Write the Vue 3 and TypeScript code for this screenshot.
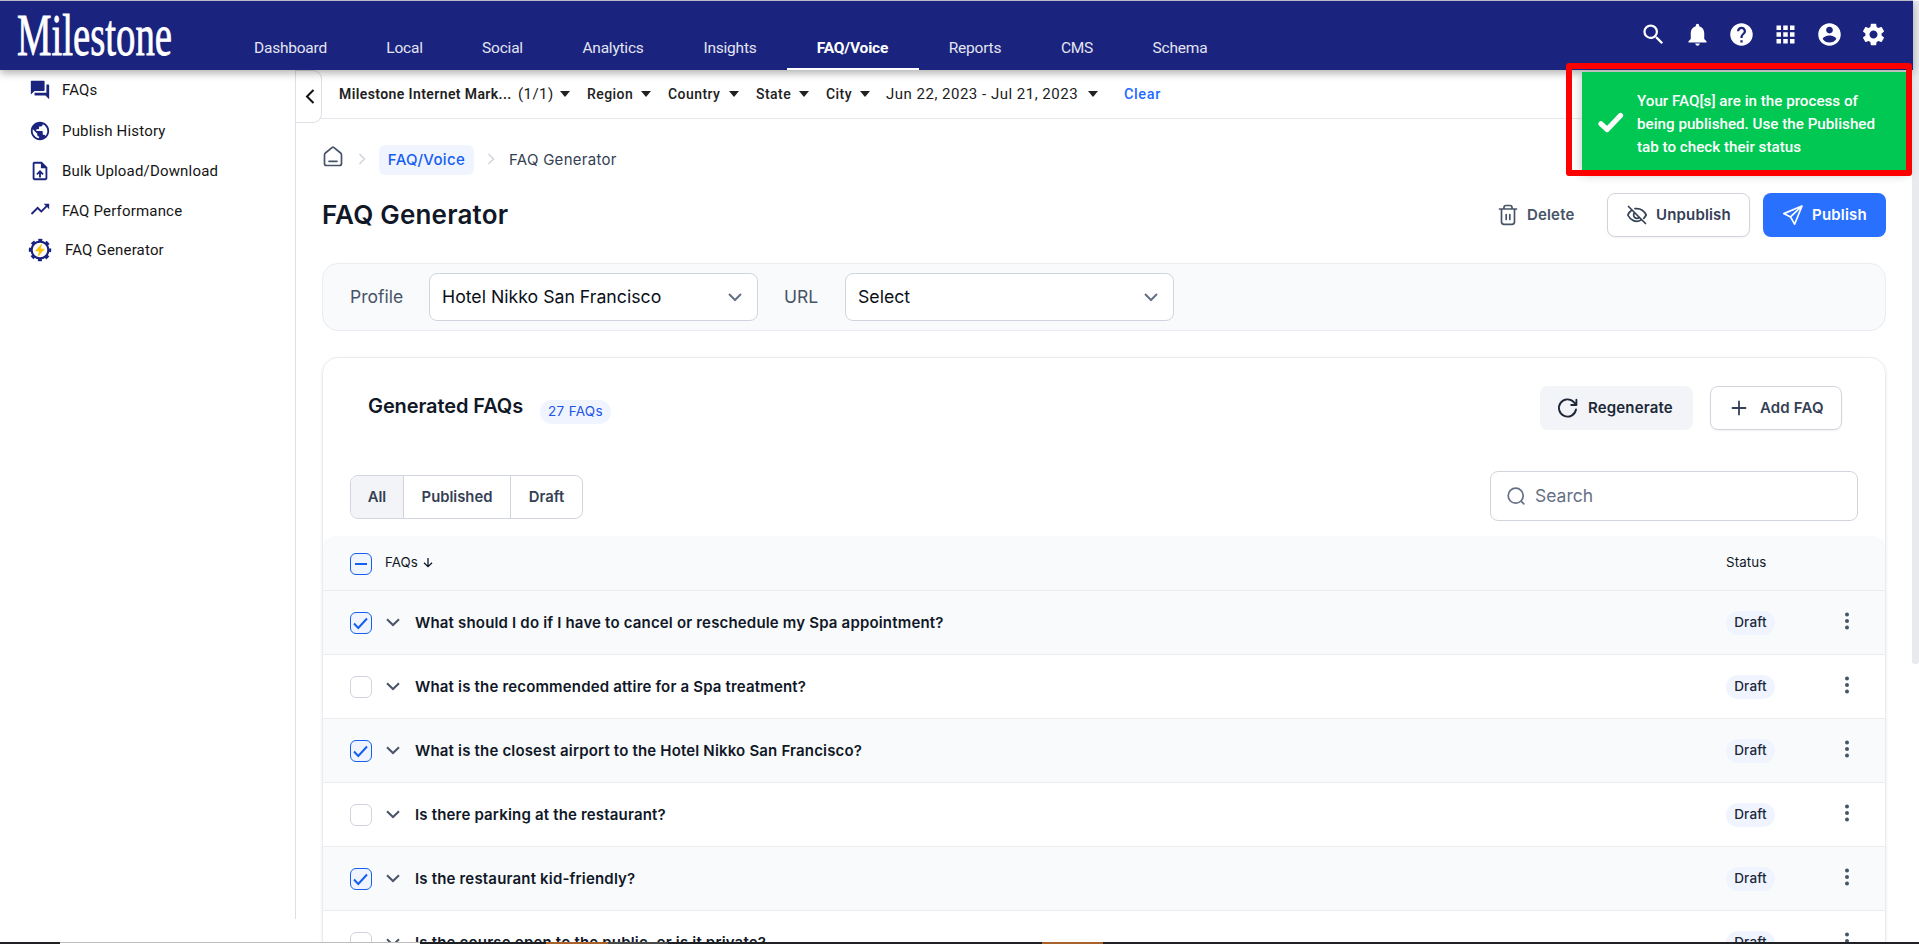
<script setup lang="ts">
interface NavTab { label: string; width: number; active?: boolean }
interface Filter { label: string; width: number; suffix?: string; strong?: boolean }
interface Faq { question: string; checked: boolean }

const tabs: NavTab[] = [
  { label: 'Dashboard', width: 132 },
  { label: 'Local', width: 96 },
  { label: 'Social', width: 100 },
  { label: 'Analytics', width: 121 },
  { label: 'Insights', width: 113 },
  { label: 'FAQ/Voice', width: 132, active: true },
  { label: 'Reports', width: 113 },
  { label: 'CMS', width: 91 },
  { label: 'Schema', width: 115 },
]

const topIcons: string[] = [
  'M15.5 14h-.79l-.28-.27A6.471 6.471 0 0 0 16 9.5 6.5 6.5 0 1 0 9.5 16c1.61 0 3.09-.59 4.23-1.57l.27.28v.79l5 4.99L20.49 19l-4.99-5zm-6 0C7.01 14 5 11.99 5 9.5S7.01 5 9.5 5 14 7.01 14 9.5 11.99 14 9.5 14z',
  'M12 22c1.1 0 2-.9 2-2h-4c0 1.1.89 2 2 2zm6-6v-5c0-3.07-1.64-5.64-4.5-6.32V4c0-.83-.67-1.5-1.5-1.5s-1.5.67-1.5 1.5v.68C7.63 5.36 6 7.92 6 11v5l-2 2v1h16v-1l-2-2z',
  'M12 2C6.48 2 2 6.48 2 12s4.48 10 10 10 10-4.48 10-10S17.52 2 12 2zm1 17h-2v-2h2v2zm2.07-7.75l-.9.92C13.45 12.9 13 13.5 13 15h-2v-.5c0-1.1.45-2.1 1.17-2.83l1.24-1.26c.37-.36.59-.86.59-1.41 0-1.1-.9-2-2-2s-2 .9-2 2H8c0-2.21 1.79-4 4-4s4 1.79 4 4c0 .88-.36 1.68-.93 2.25z',
  'M4 8h4V4H4v4zm6 12h4v-4h-4v4zm-6 0h4v-4H4v4zm0-6h4v-4H4v4zm6 0h4v-4h-4v4zm6-10v4h4V4h-4zm-6 4h4V4h-4v4zm6 6h4v-4h-4v4zm0 6h4v-4h-4v4z',
  'M12 2C6.48 2 2 6.48 2 12s4.48 10 10 10 10-4.48 10-10S17.52 2 12 2zm0 3c1.66 0 3 1.34 3 3s-1.34 3-3 3-3-1.34-3-3 1.34-3 3-3zm0 14.2c-2.5 0-4.71-1.28-6-3.22.03-1.99 4-3.08 6-3.08 1.99 0 5.97 1.09 6 3.08-1.29 1.94-3.5 3.22-6 3.22z',
  'M19.14 12.94c.04-.3.06-.61.06-.94 0-.32-.02-.64-.07-.94l2.03-1.58c.18-.14.23-.41.12-.61l-1.92-3.32c-.12-.22-.37-.29-.59-.22l-2.39.96c-.5-.38-1.03-.7-1.62-.94l-.36-2.54c-.04-.24-.24-.41-.48-.41h-3.84c-.24 0-.43.17-.47.41l-.36 2.54c-.59.24-1.13.57-1.62.94l-2.39-.96c-.22-.08-.47 0-.59.22L2.74 8.87c-.12.21-.08.47.12.61l2.03 1.58c-.05.3-.09.63-.09.94s.02.64.07.94l-2.03 1.58c-.18.14-.23.41-.12.61l1.92 3.32c.12.22.37.29.59.22l2.39-.96c.5.38 1.03.7 1.62.94l.36 2.54c.05.24.24.41.48.41h3.84c.24 0 .44-.17.47-.41l.36-2.54c.59-.24 1.13-.56 1.62-.94l2.39.96c.22.08.47 0 .59-.22l1.92-3.32c.12-.22.07-.47-.12-.61l-2.01-1.58zM12 15.6c-1.98 0-3.6-1.62-3.6-3.6s1.62-3.6 3.6-3.6 3.6 1.62 3.6 3.6-1.62 3.6-3.6 3.6z',
]

const menu: { label: string; path: string }[] = [
  { label: 'FAQs', path: 'M21 6h-2v9H6v2c0 .55.45 1 1 1h11l4 4V7c0-.55-.45-1-1-1zm-4 6V3c0-.55-.45-1-1-1H3c-.55 0-1 .45-1 1v14l4-4h10c.55 0 1-.45 1-1z' },
  { label: 'Publish History', path: 'M12 2C6.48 2 2 6.48 2 12s4.48 10 10 10 10-4.48 10-10S17.52 2 12 2zm-1 17.93c-3.95-.49-7-3.85-7-7.93 0-.62.08-1.21.21-1.79L9 15v1c0 1.1.9 2 2 2v1.93zm6.9-2.54c-.26-.81-1-1.39-1.9-1.39h-1v-3c0-.55-.45-1-1-1H8v-2h2c.55 0 1-.45 1-1V7h2c1.1 0 2-.9 2-2v-.41c2.93 1.19 5 4.06 5 7.41 0 2.08-.8 3.97-2.1 5.39z' },
  { label: 'Bulk Upload/Download', path: 'M14 2H6c-1.1 0-1.99.9-1.99 2L4 20c0 1.1.89 2 1.99 2H18c1.1 0 2-.9 2-2V8l-6-6zm4 18H6V4h7v5h5v11zM8 15.01l1.41 1.41L11 14.84V19h2v-4.16l1.59 1.59L16 15.01 12.01 11z' },
  { label: 'FAQ Performance', path: 'M16 4l2.29 2.290-4.880 4.880-4-4L2 14.590 3.410 16l6-6 4 4 6.300-6.290L22 10V4z' },
]

const filters: Filter[] = [
  { label: 'Milestone Internet Mark...', width: 171, suffix: '(1/1)', strong: true },
  { label: 'Region', width: 45, strong: true },
  { label: 'Country', width: 52, strong: true },
  { label: 'State', width: 34, strong: true },
  { label: 'City', width: 25, strong: true },
  { label: 'Jun 22, 2023 - Jul 21, 2023', width: 192 },
]

const faqs: Faq[] = [
  { question: 'What should I do if I have to cancel or reschedule my Spa appointment?', checked: true },
  { question: 'What is the recommended attire for a Spa treatment?', checked: false },
  { question: 'What is the closest airport to the Hotel Nikko San Francisco?', checked: true },
  { question: 'Is there parking at the restaurant?', checked: false },
  { question: 'Is the restaurant kid-friendly?', checked: true },
  { question: 'Is the course open to the public, or is it private?', checked: false },
]
</script>

<template>
  <div class="screen">
    <header class="topbar">
      <svg class="logo" width="160" height="60" viewBox="0 0 160 60">
        <text x="1" y="47" textLength="155" lengthAdjust="spacingAndGlyphs">Milestone</text>
      </svg>
      <nav class="tabs">
        <a v-for="t in tabs" :key="t.label" class="tab" :class="{ active: t.active }" :style="{ width: t.width + 'px' }">{{ t.label }}</a>
      </nav>
      <div class="top-icons">
        <svg v-for="(p, i) in topIcons" :key="i" width="27" height="27" viewBox="0 0 24 24"><path :d="p" /></svg>
      </div>
    </header>

    <div class="body">
      <aside class="sidebar">
        <div v-for="m in menu" :key="m.label" class="menu-item">
          <svg width="22" height="22" viewBox="0 0 24 24"><path :d="m.path" /></svg>
          <span>{{ m.label }}</span>
        </div>
        <div class="menu-item generator">
          <svg width="24" height="24" viewBox="0 0 24 24">
            <circle cx="12" cy="12" r="8.4" fill="#fff" stroke="#1a237e" stroke-width="2.2" />
            <circle cx="12" cy="12" r="10" fill="none" stroke="#1a237e" stroke-width="2.4" stroke-dasharray="4 3.854" stroke-dashoffset="2" />
            <path d="M14.300 5 7 13.200h4l-1.300 5.800L17 10.800h-4.200z" fill="#ffc107" />
          </svg>
          <span>FAQ Generator</span>
        </div>
      </aside>

      <main class="main">
        <div class="filterbar">
          <button class="collapse" aria-label="Collapse">
            <svg width="10" height="16" viewBox="0 0 10 16"><path d="M8.500 1 2 7.500l6.500 6.500" fill="none" stroke="#111" stroke-width="2" /></svg>
          </button>
          <div class="filters">
            <div v-for="f in filters" :key="f.label" class="filter" :class="{ strong: f.strong, date: !f.strong }">
              <span class="filter-label" :style="{ width: f.width + 'px' }">{{ f.label }}</span>
              <span v-if="f.suffix" class="filter-suffix">{{ f.suffix }}</span>
              <i class="caret"></i>
            </div>
            <a class="clear">Clear</a>
          </div>
        </div>

        <div class="content">
          <div class="crumbs">
            <svg class="home" width="20" height="22" viewBox="0 0 20 22" fill="none" stroke="#475467" stroke-width="1.7" stroke-linecap="round" stroke-linejoin="round">
              <path d="M1.500 9c0-.8.3-1.500.9-2L9 1.600c.6-.5 1.400-.5 2 0L17.600 7c.6.5.9 1.200.9 2v8.500a2 2 0 0 1-2 2h-13a2 2 0 0 1-2-2zM6 15.300h8" />
            </svg>
            <svg class="sep" width="8" height="12" viewBox="0 0 8 12"><path d="m1.500 1 5 5-5 5" /></svg>
            <span class="chip">FAQ/Voice</span>
            <svg class="sep second" width="8" height="12" viewBox="0 0 8 12"><path d="m1.500 1 5 5-5 5" /></svg>
            <span class="here">FAQ Generator</span>
          </div>

          <div class="title-row">
            <h1>FAQ Generator</h1>
            <div class="actions">
              <button class="btn ghost">
                <svg width="20" height="22" viewBox="0 0 20 22" fill="none" stroke="#475467" stroke-width="1.700" stroke-linecap="round" stroke-linejoin="round"><path d="M1.500 5h17M6 4.800V3.300A1.800 1.800 0 0 1 7.800 1.500h4.400A1.800 1.800 0 0 1 14 3.300v1.500M3.500 5v12.800A2.500 2.500 0 0 0 6 20.300h8a2.500 2.500 0 0 0 2.500-2.500V5M8.200 10.500v5M11.800 10.500v5" /></svg>
                <span>Delete</span>
              </button>
              <button class="btn outline unpublish">
                <svg width="22" height="20" viewBox="0 0 22 20" fill="none" stroke="#344054" stroke-width="1.700" stroke-linecap="round" stroke-linejoin="round"><path d="M2.500 1.500 19.500 18.500M9 3.700c5.600-.9 9.300 2.600 11.200 6.300-.6 1.200-1.400 2.300-2.400 3.300M6 5C4.100 6.200 2.700 8 1.800 10c2.500 5.200 8.200 8.200 13.200 5M8.600 7.700a3.300 3.300 0 0 0 4.700 4.700" /></svg>
                <span>Unpublish</span>
              </button>
              <button class="btn primary">
                <svg width="22" height="22" viewBox="0 0 22 22" fill="none" stroke="#fff" stroke-width="1.700" stroke-linecap="round" stroke-linejoin="round"><path d="M20 2 1.800 9.600l6.700 3.300L12.600 20.200zM20 2 8.500 12.900" /></svg>
                <span>Publish</span>
              </button>
            </div>
          </div>

          <section class="picker">
            <label class="profile">Profile</label>
            <div class="select"><span>Hotel Nikko San Francisco</span><svg width="14" height="9" viewBox="0 0 14 9"><path d="m1 1 6 6 6-6" /></svg></div>
            <label class="url">URL</label>
            <div class="select"><span>Select</span><svg width="14" height="9" viewBox="0 0 14 9"><path d="m1 1 6 6 6-6" /></svg></div>
          </section>

          <section class="card">
            <div class="card-head">
              <h2>Generated FAQs</h2>
              <span class="count">27 FAQs</span>
              <div class="card-actions">
                <button class="btn soft">
                  <svg width="22" height="22" viewBox="0 0 22 22" fill="none" stroke="#1d2939" stroke-width="1.900" stroke-linecap="round" stroke-linejoin="round"><path d="M19 12.500a8.600 8.600 0 1 1-2-7.200l2.300 2.700M19.400 2.800V8h-5.200" /></svg>
                  <span>Regenerate</span>
                </button>
                <button class="btn outline add">
                  <svg width="16" height="16" viewBox="0 0 16 16" fill="none" stroke="#344054" stroke-width="1.800" stroke-linecap="round"><path d="M8 1.500v13M1.500 8h13" /></svg>
                  <span>Add FAQ</span>
                </button>
              </div>
            </div>

            <div class="toolbar">
              <div class="segments">
                <button class="on all">All</button><button class="pub">Published</button><button class="draft">Draft</button>
              </div>
              <div class="search">
                <svg width="18" height="18" viewBox="0 0 18 18" fill="none" stroke="#667085" stroke-width="1.700" stroke-linecap="round"><circle cx="8.700" cy="8.700" r="7.500" /><path d="m14.300 14.300 2.500 2.500" /></svg>
                <span>Search</span>
              </div>
            </div>

            <div class="table">
              <div class="row head">
                <span class="box on"><svg width="22" height="22" viewBox="0 0 22 22"><path d="M5 11h12" /></svg></span>
                <span class="col">FAQs</span>
                <svg class="arrow" width="10" height="11" viewBox="0 0 10 11"><path d="M5 1v8.500M1 5.800l4 3.900 4-3.900" fill="none" stroke="#101828" stroke-width="1.300" /></svg>
                <span class="col status">Status</span>
              </div>
              <div v-for="f in faqs" :key="f.question" class="row" :class="{ tinted: f.checked }">
                <span class="box" :class="{ on: f.checked }"><svg v-if="f.checked" width="22" height="22" viewBox="0 0 22 22"><path d="m4 11.500 4.300 4.500L17 6.500" /></svg></span>
                <svg class="expand" width="14" height="9" viewBox="0 0 14 9"><path d="m1 1.300 6 5.700 6-5.700" /></svg>
                <span class="question">{{ f.question }}</span>
                <span class="pill">Draft</span>
                <svg class="dots" width="6" height="18" viewBox="0 0 6 18"><circle cx="3" cy="2.500" r="2" /><circle cx="3" cy="9" r="2" /><circle cx="3" cy="15.500" r="2" /></svg>
              </div>
            </div>
          </section>
        </div>
      </main>
    </div>

    <div class="scroll-thumb"></div>

    <div class="toast">
      <svg width="28" height="22" viewBox="0 0 28 22"><path d="m4 12.800 6.200 5.700L23.500 4.500" fill="none" stroke="#fff" stroke-width="5.200" stroke-linecap="round" stroke-linejoin="round" /></svg>
      <p>Your FAQ[s] are in the process of<br>being published. Use the Published<br>tab to check their status</p>
    </div>
    <div class="highlight"></div>
    <div class="taskbar"><i class="a"></i><i class="b"></i><i class="c"></i><i class="d"></i><i class="e"></i><i class="f"></i><i class="d2"></i><i class="g"></i></div>
  </div>
</template>

<style>
html, body { margin: 0; overflow: hidden; background: #fff; }
</style>

<style scoped>
* { box-sizing: border-box; }
.screen { position: relative; width: 1919px; height: 944px; overflow: hidden; background: #fff; font-family: Roboto, sans-serif; color: #101828; }
button { font: inherit; letter-spacing: inherit; color: inherit; margin: 0; padding: 0; border: 0; background: none; }
h1, h2, p { margin: 0; }
svg { display: block; flex: none; }
span { white-space: nowrap; }

.topbar { position: relative; z-index: 2; display: flex; width: 1913px; height: 70px; background: #1a237e; border-top: 1px solid #b9bcc4; box-shadow: 0 3px 8px rgba(0, 0, 0, .32); }
.logo { margin: 7px 0 0 16px; overflow: visible; }
.logo text { font-family: 'Liberation Serif', serif; font-size: 59px; fill: #fff; stroke: #fff; stroke-width: .8; }
.tabs { display: flex; margin-left: 49px; }
.tab { display: flex; align-items: center; justify-content: center; height: 69px; padding: 26px 1px 0 0; font-size: 15.500px; letter-spacing: -.22px; color: #e3e5f1; border-bottom: 2px solid transparent; white-space: nowrap; }
.tab.active { color: #fff; font-weight: 700; letter-spacing: -.15px; border-color: #fff; }
.top-icons { display: flex; gap: 17px; margin: 20px 0 0 auto; padding-right: 26.500px; height: 27px; fill: #fff; }

.body { display: flex; height: 874px; width: 1913px; }
.sidebar { width: 296px; height: 849px; border-right: 1px solid #dcdfe4; padding: 0 0 0 29px; flex: none; }
.menu-item { display: flex; align-items: center; height: 40px; gap: 11px; font-size: 15px; letter-spacing: .18px; color: #151515; }
.menu-item:nth-child(2) { height: 41px; }
.menu-item svg { fill: #1a237e; }
.generator { margin-left: -1px; gap: 13px; height: 38px; }

.main { width: 1617px; flex: none; }
.filterbar { display: flex; height: 49px; border-bottom: 1px solid #e4e7ec; }
.collapse { display: flex; align-items: center; justify-content: center; width: 26px; height: 53px; padding-left: 2px; flex: none; border: 1px solid #dcdfe4; border-left: 0; border-radius: 0 9px 9px 0; background: #fff; }
.filters { display: flex; align-items: center; padding: 0 0 0 17px; font-size: 14px; letter-spacing: .45px; color: #212121; }
.filter { display: flex; align-items: center; margin-right: 17px; }
.filter.strong .filter-label { font-weight: 500; }
.filter.date { font-size: 15px; margin-right: 26px; margin-left: -1px; letter-spacing: .5px; }
.filter.date .caret { margin-left: 10px; }
.filter:first-child .filter-label { font-weight: 600; letter-spacing: .4px; }
.filter-suffix { margin-left: 8px; width: 33px; font-size: 15px; }
.caret { margin-left: 9px; border: 5px solid transparent; border-top: 6px solid #212121; border-bottom: 0; }
.clear { font-weight: 500; font-size: 14.500px; letter-spacing: .6px; color: #1f6bff; }

.content { padding: 26px 0 0 26px; font-family: Inter, sans-serif; }
.crumbs { display: flex; align-items: center; height: 30px; font-size: 15px; }
.home { margin: -6px 0 0 1px; }
.sep { margin: -2px 12px 0 15px; fill: none; stroke: #d0d5dd; stroke-width: 1.500; }
.sep.first { margin-left: 15px; }
.chip { width: 95px; height: 30px; margin-left: 1px; line-height: 30px; text-align: center; border-radius: 6px; background: #eff4ff; color: #155eef; font-weight: 500; letter-spacing: .34px; }
.sep.second { margin: -2px 14px 0 13px; }
.here { margin-top: -1px; color: #344054; letter-spacing: .28px; }
.title-row { display: flex; align-items: center; justify-content: space-between; height: 44px; width: 1564px; margin-top: 18px; }
h1 { margin-top: -2px; font-size: 26px; font-weight: 600; letter-spacing: .2px; }
.actions, .card-actions { display: flex; }
.btn { display: flex; align-items: center; height: 44px; border-radius: 8px; font-size: 15px; font-weight: 600; letter-spacing: .16px; }
.btn span { margin-top: -1px; }
.ghost { color: #475467; width: 109px; gap: 9px; }
.outline { border: 1px solid #d0d5dd; color: #344054; box-shadow: 0 1px 2px rgba(16, 24, 40, .05); background: #fff; }
.unpublish { width: 143px; padding-left: 18px; gap: 8px; }
.primary { width: 123px; margin-left: 13px; padding-left: 19px; gap: 8px; background: #2970ff; color: #fff; letter-spacing: .2px; }

.picker { display: flex; align-items: center; width: 1564px; height: 68px; margin-top: 26px; padding-left: 27px; border: 1px solid #eaecf0; border-radius: 16px; background: #f9fafb; font-size: 17.700px; color: #0b0f19; }
.picker label, .picker .select span { margin-top: -2px; }
.picker label { color: #475467; font-size: 17.500px; }
.profile { width: 79px; }
.url { width: 87px; padding-left: 26px; }
.select { display: flex; align-items: center; justify-content: space-between; width: 329px; height: 48px; padding: 0 15px 0 12px; border: 1px solid #d0d5dd; border-radius: 8px; background: #fff; }
.select svg { fill: none; stroke: #667085; stroke-width: 2; }

.card { width: 1564px; height: 700px; margin-top: 26px; border: 1px solid #eaecf0; border-radius: 16px; box-shadow: 0 1px 3px rgba(16, 24, 40, .1); }
.card-head { display: flex; padding: 28px 43px 0 45px; height: 113px; }
h2 { height: 40px; line-height: 41px; width: 172px; font-size: 20px; font-weight: 600; letter-spacing: -.1px; white-space: nowrap; }
.count { width: 71px; height: 24px; margin-top: 14px; line-height: 23px; text-align: center; border-radius: 12px; background: #eff4ff; color: #2055eb; font-size: 13.500px; letter-spacing: .3px; }
.card-actions { margin-left: auto; gap: 17px; }
.soft { width: 153px; padding-left: 17px; gap: 9px; background: #f2f4f7; color: #1d2939; }
.add { width: 132px; padding-left: 20px; gap: 13px; }
.toolbar { display: flex; justify-content: space-between; padding: 0 27px; height: 65px; }
.segments { display: flex; width: 233px; height: 44px; margin-top: 4px; border: 1px solid #d0d5dd; border-radius: 8px; overflow: hidden; font-size: 14.800px; font-weight: 600; color: #344054; }
.segments button { border-right: 1px solid #d0d5dd; }
.all { width: 53px; }
.all.on { background: #f2f4f7; }
.pub { width: 107px; }
.segments .draft { flex: 1; border: 0; }
.search { display: flex; align-items: center; width: 368px; height: 50px; padding-left: 16px; gap: 10px; border: 1px solid #d0d5dd; border-radius: 8px; font-size: 17.500px; color: #667085; }
.search span { margin-top: -2px; }

.row { display: flex; align-items: center; height: 64px; padding-left: 27px; border-bottom: 1px solid #eaecf0; }
.row.tinted, .row.head { background: #f9fafb; }
.row.head { height: 55px; border-radius: 12px 12px 0 0; }
.box { width: 22px; height: 22px; flex: none; border: 1px solid #d0d5dd; border-radius: 6px; background: #fff; }
.head .box { margin-top: 2px; }
.box.on { border-color: #155eef; background: #eff4ff; }
.box svg { margin: -1px; fill: none; stroke: #155eef; stroke-width: 2; }
.col { margin: -2px 0 0 13px; width: 33px; font-size: 13.300px; letter-spacing: .1px; color: #101828; }
.arrow { margin: -1px 0 0 5px; }
.col.status { margin-left: auto; width: 159px; }
.expand { margin-left: 14px; fill: none; stroke: #475467; stroke-width: 2; }
.question { margin-left: 15px; font-size: 15px; font-weight: 600; letter-spacing: .175px; }
.pill { width: 49px; height: 24px; line-height: 23px; margin-left: auto; text-align: center; border-radius: 12px; background: #eff4ff; color: #1d2939; font-size: 13.500px; font-weight: 500; letter-spacing: .15px; }
.dots { margin: -4px 35px 0 69px; fill: #475467; }

.scroll-thumb { position: absolute; top: 1px; right: 0; width: 7px; height: 663px; border-radius: 0 0 3px 3px; background: #e8eaed; }
.toast { position: absolute; z-index: 3; left: 1582px; top: 72px; width: 325px; height: 99px; display: flex; align-items: center; padding-left: 15px; gap: 12px; background: #00c853; color: #fff; box-shadow: 0 3px 10px rgba(0, 0, 0, .25); font-size: 15.200px; line-height: 23px; font-weight: 500; }
.toast p { white-space: nowrap; padding-top: 5px; }
.highlight { position: absolute; z-index: 4; left: 1566px; top: 63px; width: 346px; height: 113px; border: 6px solid #f00; border-radius: 3px; }
.taskbar { position: absolute; z-index: 5; left: 0; top: 942px; width: 1919px; height: 2px; display: flex; background: #202124; }
.taskbar i { height: 2px; }
.a { width: 60px; }
.b { width: 360px; background: #fff; border-top: 1px solid #bdbdbd; }
.c { width: 126px; }
.d { width: 62px; background: #a9622b; }
.e { width: 60px; background: #4a4a4a; }
.f { width: 374px; }
.d2 { width: 61px; background: #a9622b; }
.g { flex: 1; }
</style>
